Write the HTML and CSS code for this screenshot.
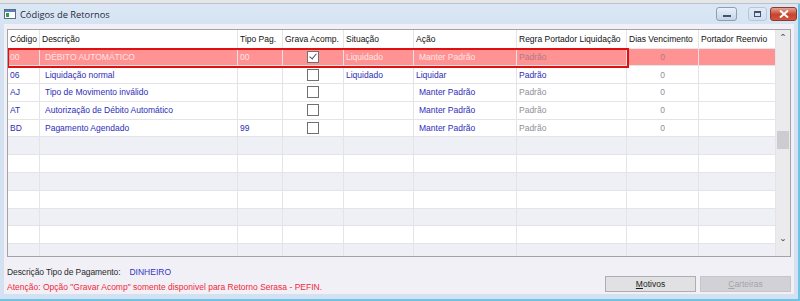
FILE: index.html
```html
<!DOCTYPE html>
<html lang="pt">
  <head>
    <meta charset="UTF-8" />
    <title>Códigos de Retornos</title>
    <link rel="stylesheet" href="styles.css">
  </head>
  <body>
    <div class="behind"></div>
    <div class="window">
      <div class="titlebar">
        <svg class="app-icon" width="12" height="10" viewBox="0 0 12 10">
          <rect x="0.5" y="0.5" width="11" height="9" fill="#fff" stroke="#5a6d86"/>
          <rect x="1" y="1" width="10" height="2" fill="#5b7fb8"/>
          <rect x="2" y="4" width="3" height="4" fill="#2f9e44"/>
        </svg>
        <span class="title">Códigos de Retornos</span>
        <div class="controls">
          <div class="ctl ctl-min"><span></span></div>
          <div class="ctl ctl-max"><span></span></div>
          <div class="ctl ctl-close">
            <svg width="10" height="8" viewBox="0 0 10 8">
              <path d="M1 0.5 L9 7.5 M9 0.5 L1 7.5" stroke="#fff" stroke-width="2"/>
            </svg>
          </div>
        </div>
      </div>

      <div class="client">
        <div class="grid">
          <div class="grid-body">
            <div class="row head">
              <div>Código</div>
              <div>Descrição</div>
              <div>Tipo Pag.</div>
              <div>Grava Acomp.</div>
              <div>Situação</div>
              <div>Ação</div>
              <div>Regra Portador Liquidação</div>
              <div>Dias Vencimento</div>
              <div>Portador Reenvio</div>
            </div>

            <div class="row data selected">
              <div>00</div>
              <div>DÉBITO AUTOMÁTICO</div>
              <div>00</div>
              <div class="center"><span class="check on"></span></div>
              <div>Liquidado</div>
              <div>Manter Padrão</div>
              <div class="muted">Padrão</div>
              <div class="center muted">0</div>
              <div></div>
            </div>
            <div class="row data">
              <div>06</div>
              <div>Liquidação normal</div>
              <div></div>
              <div class="center"><span class="check"></span></div>
              <div>Liquidado</div>
              <div class="tight">Liquidar</div>
              <div>Padrão</div>
              <div class="center muted">0</div>
              <div></div>
            </div>
            <div class="row data">
              <div>AJ</div>
              <div>Tipo de Movimento inválido</div>
              <div></div>
              <div class="center"><span class="check"></span></div>
              <div></div>
              <div>Manter Padrão</div>
              <div class="muted">Padrão</div>
              <div class="center muted">0</div>
              <div></div>
            </div>
            <div class="row data">
              <div>AT</div>
              <div>Autorização de Débito Automático</div>
              <div></div>
              <div class="center"><span class="check"></span></div>
              <div></div>
              <div>Manter Padrão</div>
              <div class="muted">Padrão</div>
              <div class="center muted">0</div>
              <div></div>
            </div>
            <div class="row data">
              <div>BD</div>
              <div>Pagamento Agendado</div>
              <div>99</div>
              <div class="center"><span class="check"></span></div>
              <div></div>
              <div>Manter Padrão</div>
              <div class="muted">Padrão</div>
              <div class="center muted">0</div>
              <div></div>
            </div>

            <div class="row empty alt"><div></div><div></div><div></div><div></div><div></div><div></div><div></div><div></div><div></div></div>
            <div class="row empty"><div></div><div></div><div></div><div></div><div></div><div></div><div></div><div></div><div></div></div>
            <div class="row empty alt"><div></div><div></div><div></div><div></div><div></div><div></div><div></div><div></div><div></div></div>
            <div class="row empty"><div></div><div></div><div></div><div></div><div></div><div></div><div></div><div></div><div></div></div>
            <div class="row empty alt"><div></div><div></div><div></div><div></div><div></div><div></div><div></div><div></div><div></div></div>
            <div class="row empty"><div></div><div></div><div></div><div></div><div></div><div></div><div></div><div></div><div></div></div>
            <div class="row empty alt"><div></div><div></div><div></div><div></div><div></div><div></div><div></div><div></div><div></div></div>

            <!-- contorno da linha atual -->
            <div class="focus-box"></div>
          </div>

          <div class="scrollbar">
            <span class="arrow">&#710;</span>
            <div class="track"><div class="thumb"></div></div>
            <span class="arrow down">&#711;</span>
          </div>
        </div>

        <div class="footer">
          <div class="info">
            <p><span class="lbl">Descrição Tipo de Pagamento:</span><span class="value">DINHEIRO</span></p>
            <p class="warn">Atenção: Opção "Gravar Acomp" somente disponivel para Retorno Serasa - PEFIN.</p>
          </div>
          <div class="buttons">
            <button class="btn"><u>M</u>otivos</button>
            <button class="btn" disabled><u>C</u>arteiras</button>
          </div>
        </div>
      </div>
    </div>
  </body>
</html>
```

FILE: styles.css
```css
body {
  margin: 0;
  width: 800px;
  height: 301px;
  overflow: hidden;
  background-color: #d9e4f1;
  font-family: "Liberation Sans", Arial, sans-serif;
  font-size: 8.5px;
  color: #000;
}

.behind {
  height: 3px;
  background-color: #e6e6e6;
  border-bottom: 1px solid #b9c3cf;
}

.window {
  height: 297px;
  background: linear-gradient(#dbe7f4, #d3e1f1 30px, #d3e1f1);
  border-right: 2px solid #6fc3e6;
  border-bottom: 2px solid #6fc3e6;
  box-sizing: border-box;
}

.titlebar {
  display: flex;
  align-items: center;
  height: 20px;
  padding-left: 4px;
}

.app-icon {
  margin-right: 4px;
}

.title {
  font-family: "Open Sans", "Liberation Sans", sans-serif;
  font-size: 9.3px;
  color: #1e2a3a;
}

.controls {
  display: flex;
  margin-left: auto;
  margin-right: 1px;
}

.ctl {
  width: 19px;
  height: 12px;
  border: 1px solid #8a9fba;
  border-radius: 3px;
  background: linear-gradient(#e9f0f8, #c4d3e6);
  display: flex;
  align-items: center;
  justify-content: center;
}

.ctl-min span {
  width: 8px;
  height: 2px;
  margin-top: 3px;
  background-color: #3f5470;
}

.ctl-max {
  width: 17px;
  margin-left: 11px;
  border-color: #b7c7da;
  background: linear-gradient(#e2eaf4, #d2def0);
}

.ctl-max span {
  width: 5px;
  height: 3px;
  border: 1px solid #3f5470;
  border-top-width: 2px;
}

.ctl-close {
  width: 25px;
  margin-left: 3px;
  border-color: #8a3a30;
  background: linear-gradient(#e8a493, #c7432e 55%, #d1563c);
}

.client {
  margin: 0 4px 0 4px;
  height: 270px;
  background-color: #f0f0f6;
  padding: 5px 0 0 3px;
  box-sizing: border-box;
}

.grid {
  display: flex;
  width: 784px;
  height: 228px;
  border: 1px solid #a3a3a8;
  box-sizing: border-box;
  background-color: #fff;
}

.grid-body {
  position: relative;
  flex: 1;
  overflow: hidden;
}

.row {
  display: grid;
  grid-template-columns: 32px 198px 45px 61px 70px 103px 110px 72px 78px;
  height: 17.8px;
}

.row > div {
  border-right: 1px solid #e3e3e8;
  border-bottom: 1px solid #e3e3e8;
  padding-left: 2px;
  display: flex;
  align-items: center;
  white-space: nowrap;
  overflow: hidden;
}

.row.head {
  height: 18.5px;
  color: #111;
}

.row.head > div {
  border-bottom-color: #e6e6ea;
}

.row.data {
  color: #2d2db8;
}

.row.data > div:nth-child(2),
.row.data > div:nth-child(6) {
  padding-left: 5px;
}

.row.data > div.tight {
  padding-left: 2px;
}

.row.data .muted {
  color: #8f8f98;
}

.row.selected {
  background-color: #ff9393;
  color: #ffe3e3;
}

.row.selected .muted {
  color: #b07a80;
}

.row.empty.alt {
  background-color: #eef0f6;
}

.center {
  justify-content: center;
  padding-left: 0 !important;
}

.check {
  width: 10px;
  height: 10px;
  border: 1px solid #707070;
  background-color: #fff;
  position: relative;
}

.check.on::after {
  content: "";
  position: absolute;
  left: 3px;
  top: 0;
  width: 3px;
  height: 6px;
  border-right: 1.5px solid #555;
  border-bottom: 1.5px solid #555;
  transform: rotate(40deg);
}

.focus-box {
  position: absolute;
  left: -1px;
  top: 18px;
  width: 622px;
  height: 20px;
  border: 2px solid #e01010;
  box-sizing: border-box;
}

.scrollbar {
  width: 14px;
  background-color: #ebebee;
  display: flex;
  flex-direction: column;
  align-items: center;
  border-left: 1px solid #e3e3e8;
}

.arrow {
  height: 17px;
  font-size: 12px;
  line-height: 20px;
  color: #555;
}

.arrow.down {
  line-height: 12px;
}

.track {
  flex: 1;
  width: 100%;
  padding-top: 84px;
  box-sizing: border-box;
}

.thumb {
  margin: 0 1px;
  height: 18px;
  background-color: #cdcdd1;
}

.footer {
  display: flex;
  align-items: flex-start;
  padding-top: 10px;
}

.info p {
  margin: 0 0 5px;
  line-height: 10px;
}

.lbl {
  color: #2a2a2a;
  margin-right: 9px;
  letter-spacing: -0.1px;
}

.value {
  color: #3434c4;
}

.warn {
  color: #f3283a;
}

.buttons {
  display: flex;
  gap: 4px;
  margin-left: auto;
  margin-right: 3px;
  margin-top: 9px;
}

.btn {
  width: 91px;
  height: 16px;
  padding: 0;
  font-family: "Liberation Sans", Arial, sans-serif;
  font-size: 8.5px;
  color: #1a1a1a;
  background-color: #e1e1e3;
  border: 1px solid #adadb2;
}

.btn:disabled {
  background-color: #d2d2d6;
  border-color: #c6c6ca;
  color: #a5a5aa;
}
```
